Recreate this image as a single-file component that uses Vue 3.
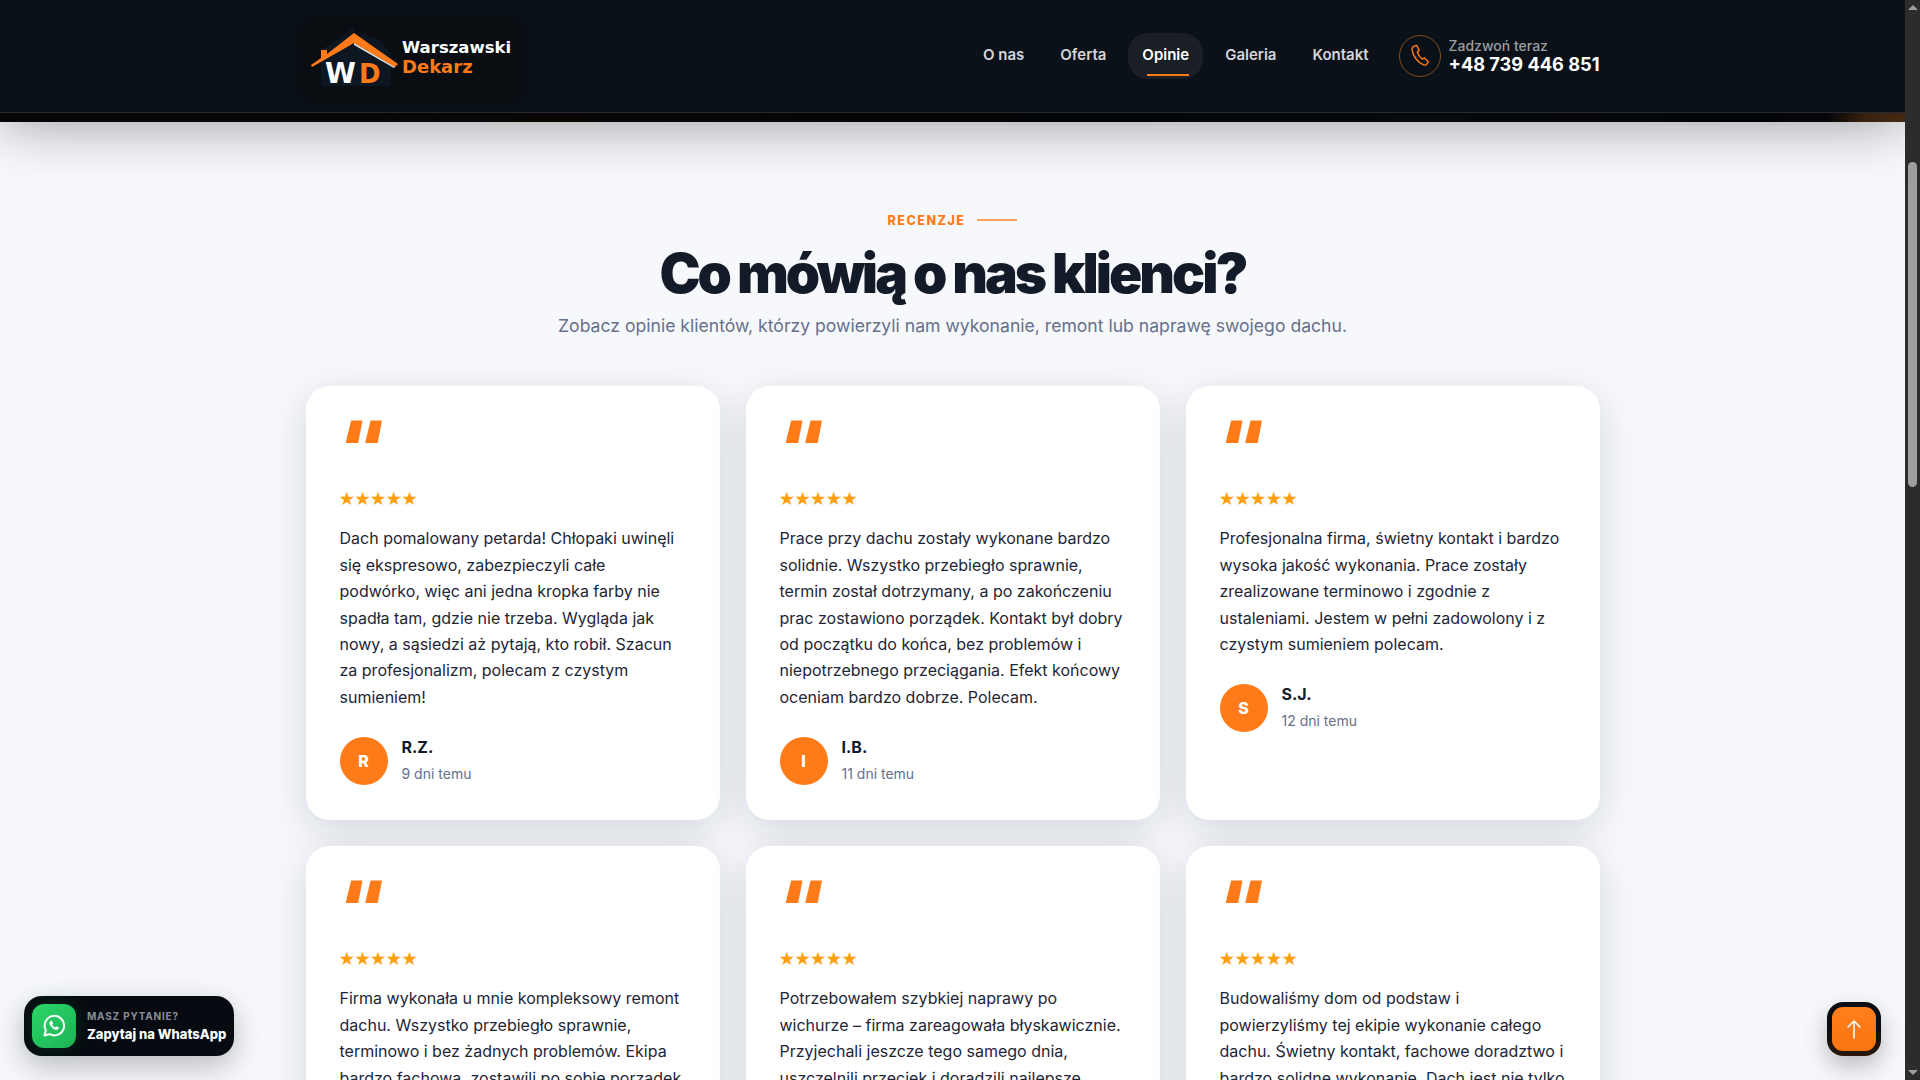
<template>
  <div class="screen">
    <div class="page">
      <header class="topbar">
        <div class="topbar-in">
          <a class="logo">
            <svg class="logo-mark" viewBox="0 0 226 86" width="226" height="86">
              <path d="M23 35 L40 24 L56 12 L58 22 L66 18 L72 22 L80 24 L93 38 L93 71 L23 71 Z" fill="#0d1722" />
              <path d="M13 50 L23 43 L23 35 L29 35 L29 39 L56 18 L100 49 L97 52 L56 28 L14 52 Z" fill="#ff7a18" />
              <path d="M56 28 L97 52 L96 53 L56 30 Z" fill="#e8e4de" />
              <text x="27" y="68" class="logo-w">W</text>
              <text x="61" y="68" class="logo-d">D</text>
              <text x="104" y="38" class="logo-t1">Warszawski</text>
              <text x="104" y="58" class="logo-t2">Dekarz</text>
            </svg>
          </a>
          <nav class="nav">
            <a>O nas</a>
            <a>Oferta</a>
            <a class="active">Opinie</a>
            <a>Galeria</a>
            <a>Kontakt</a>
          </nav>
          <div class="call">
            <span class="call-ico">
              <svg viewBox="0 0 24 24" width="26" height="26" fill="none" stroke="#ff7a18" stroke-width="1.300" stroke-linecap="round" stroke-linejoin="round"><path d="M6.500 2.800 9 2.200l2.200 4.600-1.700 1.500c.7 2.300 2.500 5 4.600 6.600l2-1.100 3.600 3.600-1.500 2.200c-.7.8-1.800 1-2.800.6C10 18 5.600 12.400 4.700 6.600c-.2-1.700.5-3.200 1.800-3.800Z"/></svg>
            </span>
            <span class="call-txt"><small>Zadzwoń teraz</small><strong>+48 739 446 851</strong></span>
          </div>
        </div>
      </header>
      <div class="hero-strip"></div>

      <section class="reviews">
        <div class="eyebrow"><span>RECENZJE</span><i></i></div>
        <h2>Co mówią o nas klienci?</h2>
        <p class="lead">Zobacz opinie klientów, którzy powierzyli nam wykonanie, remont lub naprawę swojego dachu.</p>

        <div class="grid">
          <article v-for="r in reviews" :key="r.name" class="card">
            <div class="quote"><i></i><i></i></div>
            <div class="stars">★★★★★</div>
            <p class="body">{{ r.text }}</p>
            <div class="who">
              <span class="avatar">{{ r.name[0] }}</span>
              <span class="who-txt"><b>{{ r.name }}</b><small>{{ r.when }}</small></span>
            </div>
          </article>
        </div>
      </section>

      <a class="wa">
        <span class="wa-ico">
          <svg viewBox="0 0 24 24" width="26" height="26" fill="none" stroke="#fff" stroke-width="1.800" stroke-linejoin="round"><path d="M3.200 20.800 4.500 16a9 9 0 1 1 3.500 3.500Z"/><path d="M8.800 7.600c-1 .9-.9 2.400.3 4.200 1.300 2 3 3.300 4.800 3.500 1.200.1 2.100-.6 2.300-1.700l-2.100-1-1 1c-1.300-.5-2.500-1.800-3.100-3.100l.8-1-.9-2.100Z" fill="#fff" stroke-width=".6"/></svg>
        </span>
        <span class="wa-txt"><small>MASZ PYTANIE?</small><b>Zapytaj na WhatsApp</b></span>
      </a>
      <a class="totop">
        <svg viewBox="0 0 24 24" width="24" height="24" fill="none" stroke="#fff" stroke-width="1.500" stroke-linecap="round" stroke-linejoin="round"><path d="M12 21V4M6 10l6-6 6 6"/></svg>
      </a>
    </div>
    <div class="sbar">
      <span class="arr up"></span>
      <span class="thumb"></span>
      <span class="arr down"></span>
    </div>
  </div>
</template>

<script setup>
const reviews = [
  { name: 'R.Z.', when: '9 dni temu', text: 'Dach pomalowany petarda! Chłopaki uwinęli się ekspresowo, zabezpieczyli całe podwórko, więc ani jedna kropka farby nie spadła tam, gdzie nie trzeba. Wygląda jak nowy, a sąsiedzi aż pytają, kto robił. Szacun za profesjonalizm, polecam z czystym sumieniem!' },
  { name: 'I.B.', when: '11 dni temu', text: 'Prace przy dachu zostały wykonane bardzo solidnie. Wszystko przebiegło sprawnie, termin został dotrzymany, a po zakończeniu prac zostawiono porządek. Kontakt był dobry od początku do końca, bez problemów i niepotrzebnego przeciągania. Efekt końcowy oceniam bardzo dobrze. Polecam.' },
  { name: 'S.J.', when: '12 dni temu', text: 'Profesjonalna firma, świetny kontakt i bardzo wysoka jakość wykonania. Prace zostały zrealizowane terminowo i zgodnie z ustaleniami. Jestem w pełni zadowolony i z czystym sumieniem polecam.' },
  { name: 'M.K.', when: '14 dni temu', text: 'Firma wykonała u mnie kompleksowy remont dachu. Wszystko przebiegło sprawnie, terminowo i bez żadnych problemów. Ekipa bardzo fachowa, zostawili po sobie porządek i dobre wrażenie. Zdecydowanie polecam.' },
  { name: 'T.W.', when: '15 dni temu', text: 'Potrzebowałem szybkiej naprawy po wichurze – firma zareagowała błyskawicznie. Przyjechali jeszcze tego samego dnia, uszczelnili przeciek i doradzili najlepsze rozwiązanie na przyszłość. Pełen profesjonalizm, polecam.' },
  { name: 'A.N.', when: '18 dni temu', text: 'Budowaliśmy dom od podstaw i powierzyliśmy tej ekipie wykonanie całego dachu. Świetny kontakt, fachowe doradztwo i bardzo solidne wykonanie. Dach jest nie tylko szczelny, ale też wygląda świetnie. Gorąco polecam.' },
]
</script>

<style>
html, body { margin: 0; padding: 0; overflow: hidden; background: #f6f8fc; }
</style>

<style scoped>
* { box-sizing: border-box; }

.screen {
  width: 1920px; height: 1080px;
  display: flex;
  overflow: hidden;
  font-family: Inter, "Noto Sans", sans-serif;
}
.page { flex: 1; min-width: 0; position: relative; overflow: hidden; background: #f6f8fc; }

.topbar {
  position: relative;
  z-index: 2;
  height: 113px;
  background: #0b1118;
  border-bottom: 1px solid #232a32;
  box-shadow: 0 8px 60px rgba(0, 0, 0, .42);
}
.topbar-in {
  width: 1294px;
  margin: 0 auto;
  height: 112px;
  display: flex;
  align-items: center;
}
.logo {
  display: block;
  width: 226px; height: 86px;
  margin: 8px 0 0 -8px;
  background: #0a0e13;
  border-radius: 22px;
  box-shadow: 0 0 10px #0a0e13;
}
.logo-mark { display: block; margin-top: -2px; }
.logo-w { font: 700 28px "DejaVu Sans", sans-serif; fill: #fff; }
.logo-d { font: 700 26px "DejaVu Sans", sans-serif; fill: #ff7a18; }
.logo-t1 { font: 700 16.500px "DejaVu Sans", sans-serif; fill: #fff; }
.logo-t2 { font: 700 18px "DejaVu Sans", sans-serif; fill: #ff7a18; }

.nav { margin-left: auto; display: flex; align-items: center; gap: 8px; }
.nav a {
  position: relative;
  padding: 0 14px;
  height: 46px;
  line-height: 44px;
  font-size: 15px;
  font-weight: 600;
  color: #d3d6da;
  border-radius: 20px;
}
.nav a.active { background: #1a1f25; color: #fff; }
.nav a.active::after {
  content: '';
  position: absolute;
  left: 19px; right: 14px; bottom: 3px;
  height: 2px;
  background: #ff7a18;
}

.call { display: flex; align-items: center; gap: 8px; margin-left: 16px; }
.call-ico {
  width: 42px; height: 42px;
  border-radius: 50%;
  border: 1px solid #8a4a1a;
  display: flex; align-items: center; justify-content: center;
}
.call-txt { display: flex; flex-direction: column; }
.call-txt small { font-size: 14px; font-weight: 500; color: #9a9ea4; line-height: 16px; }
.call-txt strong { font-size: 18.200px; font-weight: 700; color: #fff; line-height: 21px; }

.hero-strip {
  height: 9px;
  background: linear-gradient(90deg, #0a0807 0, #0c0806 30%, #05070a 60%, #0a0c10 75%, #05060a 92%, #0a0a0c 96%, #4a2c14 98%, #4f3016 100%);
}

.reviews {
  height: 958px;
  padding-top: 90px;
  text-align: center;
}
.eyebrow {
  display: flex; align-items: center; justify-content: center; gap: 12px;
  height: 16px;
  font-size: 12.500px; font-weight: 800; letter-spacing: 1.500px; color: #ff7a18;
}
.eyebrow i { width: 40px; height: 2px; background: #ffa05c; }
h2 {
  margin: 14px 0 0;
  font-size: 55px;
  line-height: 62px;
  font-weight: 900;
  letter-spacing: -3px;
  color: #131a28;
}
.lead { margin: 8px 0 0; font-size: 17.600px; line-height: 28px; color: #66708a; }

.grid {
  width: 1294px;
  margin: 46.400px auto 0;
  display: grid;
  grid-template-columns: repeat(3, 1fr);
  gap: 26px;
  text-align: left;
}
.card {
  height: 434px;
  padding: 34px;
  background: #fff;
  border-radius: 24px;
  box-shadow: 0 10px 40px rgba(15, 23, 42, .14);
}
.quote { display: flex; gap: 2.500px; height: 24px; margin-left: 6px; }
.quote i { width: 17px; height: 23px; background: #ff7a18; clip-path: polygon(33% 0, 100% 0, 74% 100%, 0 100%); }
.stars { margin: 44px 0 0 -1px; font-size: 18.500px; line-height: 22px; letter-spacing: -.9px; color: #ff9f0a; font-family: "DejaVu Sans", sans-serif; }
.body { margin: 15px 0 0; font-size: 16px; line-height: 26.400px; color: #1e2636; }
.who { display: flex; align-items: center; gap: 14px; margin-top: 26px; }
.avatar {
  width: 48px; height: 48px;
  border-radius: 50%;
  background: #ff7a18;
  color: #fff;
  font-size: 16px; font-weight: 800;
  display: flex; align-items: center; justify-content: center;
}
.who-txt { display: flex; flex-direction: column; gap: 5px; }
.who-txt b { font-size: 16px; font-weight: 700; color: #131a28; line-height: 22px; }
.who-txt small { font-size: 14px; color: #66708a; line-height: 22px; }

.wa {
  position: absolute; left: 24px; bottom: 24px;
  width: 210px; height: 60px;
  padding: 8px;
  display: flex; align-items: center; gap: 11px;
  background: #070b11;
  border-radius: 18px;
  box-shadow: 0 10px 30px rgba(0, 0, 0, .25);
}
.wa-ico {
  width: 44px; height: 44px;
  border-radius: 12px;
  background: linear-gradient(135deg, #2bd568, #1eb354);
  display: flex; align-items: center; justify-content: center;
  flex: none;
  box-shadow: 0 0 18px rgba(37, 211, 102, .14);
}
.wa-txt { display: flex; flex-direction: column; gap: 3px; padding-bottom: 2px; }
.wa-txt small { font-size: 10px; font-weight: 700; letter-spacing: .8px; color: #8a8e95; line-height: 14px; }
.wa-txt b { font-size: 13px; font-weight: 800; color: #fff; line-height: 16px; white-space: nowrap; }

.totop {
  position: absolute; right: 24px; bottom: 24px;
  width: 54px; height: 54px;
  border: 5px solid transparent;
  border-radius: 16px;
  background: linear-gradient(#ff7f1c, #fb7410) padding-box, linear-gradient(#0a0e14 50%, #2c1709) border-box;
  display: flex; align-items: center; justify-content: center;
  box-shadow: 0 10px 24px rgba(0, 0, 0, .25);
}

.sbar {
  width: 15px; height: 1080px;
  background: #2c2c2c;
  position: relative;
  flex: none;
}
.thumb {
  position: absolute; left: 3px; top: 162px;
  width: 9px; height: 325px;
  background: #9f9f9f;
  border-radius: 5px;
}
.arr { position: absolute; left: 3px; width: 0; height: 0; border-left: 5px solid transparent; border-right: 5px solid transparent; }
.arr.up { top: 5px; border-bottom: 5px solid #9f9f9f; }
.arr.down { bottom: 5px; border-top: 5px solid #9f9f9f; }
</style>
